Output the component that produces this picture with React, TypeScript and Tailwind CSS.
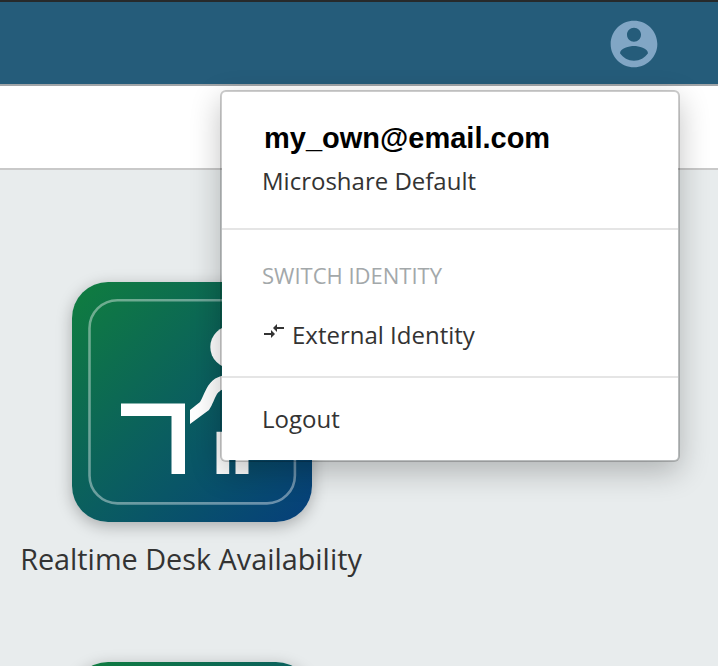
import React from "react";

function AccountIcon() {
  return (
    <svg viewBox="0 0 24 24" className="h-14 w-14" fill="#81a6c5">
      <path d="M12 2C6.48 2 2 6.48 2 12s4.48 10 10 10 10-4.48 10-10S17.52 2 12 2zm0 3c1.66 0 3 1.34 3 3s-1.34 3-3 3-3-1.34-3-3 1.34-3 3-3zm0 14.2c-2.5 0-4.71-1.28-6-3.22.03-1.99 4-3.08 6-3.08 1.99 0 5.97 1.09 6 3.08-1.29 1.94-3.5 3.22-6 3.22z" />
    </svg>
  );
}

function SwitchIcon() {
  return (
    <svg viewBox="0 0 22 16" className="h-4 w-[22px]" fill="#333333">
      <path d="M1 9h7V6l4 4-4 4v-3H1zM21 3h-7V0l-4 4 4 4V5h7z" />
    </svg>
  );
}

function DeskIcon() {
  return (
    <svg viewBox="0 0 240 240" className="h-60 w-60" fill="white">
      <rect x="17.5" y="18.2" width="205.4" height="203.2" rx="28" fill="none" stroke="white" strokeOpacity="0.4" strokeWidth="2.6" />
      <path d="M49 121.5h64V192H99.5v-58H49z" />
      <circle cx="159.6" cy="65" r="21.3" />
      <path d="M160 93c-11 0-18 2-24 11-4 7-6 13-8 16l-10 8v14l19-14c4-6 5-11 8-16 3-4 7-6 15-6z" />
      <path d="M144.5 149.7h32V192h-13v-14h-6.3v14h-12.7z" />
    </svg>
  );
}

function Tile({ children }: { children?: React.ReactNode }) {
  return (
    <div className="h-60 w-60 shrink-0 overflow-hidden rounded-[36px] bg-[linear-gradient(135deg,#0f7a42_6%,#0a5d60_52%,#06407a_98%)] shadow-[0_4px_16px_rgba(0,0,0,0.28)]">
      {children}
    </div>
  );
}

function AccountMenu() {
  return (
    <div className="absolute left-[220px] top-[90px] flex h-[372px] w-[460px] flex-col rounded-[6px] border-2 border-black/20 bg-white bg-clip-padding text-[24px] leading-8 text-[#333333] shadow-[0_10px_30px_rgba(0,0,0,0.24)]">
      <div className="h-[138px] border-b-2 border-[#e5e5e5] px-10 pt-[30px]">
        <div className="pl-[2px] font-['Liberation_Sans',Arial,sans-serif] text-[29px] font-bold leading-8 text-black">my_own@email.com</div>
        <div className="mt-[11px] whitespace-nowrap">Microshare Default</div>
      </div>
      <div className="h-[148px] border-b-2 border-[#e5e5e5] px-10 pt-[29px]">
        <div className="text-[22px] text-[#a3a8aa]">SWITCH IDENTITY</div>
        <div className="mt-7 flex">
          <div className="w-[30px] pl-px pt-[5px]"><SwitchIcon /></div>
          <span className="whitespace-nowrap">External Identity</span>
        </div>
      </div>
      <div className="px-10 pt-[25px]">Logout</div>
    </div>
  );
}

export default function App() {
  return (
    <div className="relative h-[666px] w-[718px] overflow-hidden bg-[#e8eced] font-['Open_Sans',sans-serif]">
      <header className="flex h-[86px] justify-end border-b-2 border-t-2 border-b-[#a1a5a8] border-t-[#272a2b] bg-[#255c7a] pr-14 pt-[14px]">
        <AccountIcon />
      </header>
      <div className="h-[84px] border-b-2 border-[#c9c9c9] bg-white" />
      <main className="flex w-96 flex-col items-center pt-28">
        <Tile><DeskIcon /></Tile>
        <div className="mb-[83px] mt-[17px] h-10 whitespace-nowrap pr-[2px] text-[28.8px] leading-10 text-[#333333]">Realtime Desk Availability</div>
        <Tile />
      </main>
      <AccountMenu />
    </div>
  );
}
